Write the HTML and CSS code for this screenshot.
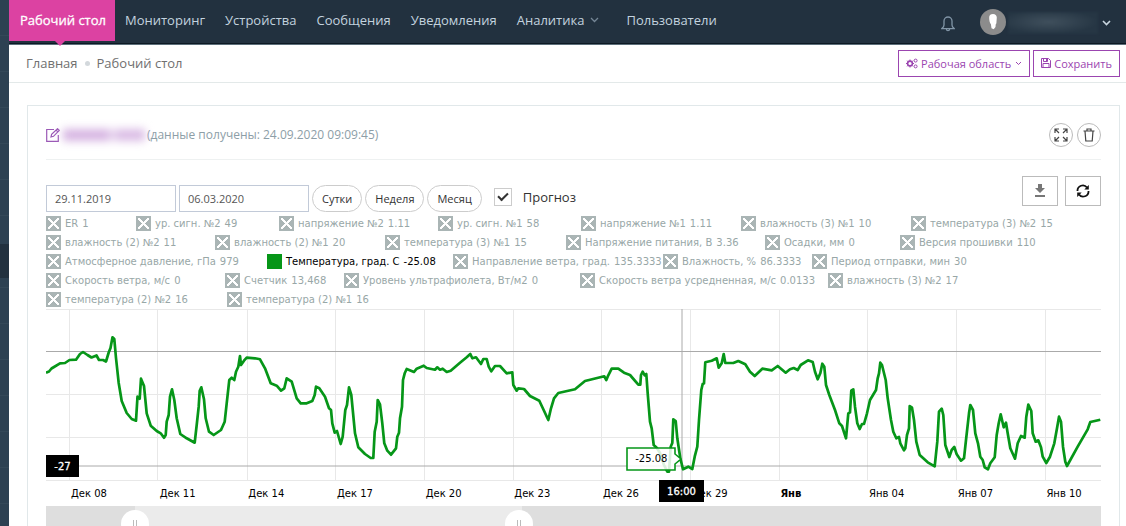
FILE: index.html
```html
<!DOCTYPE html>
<html lang="ru">
<head>
<meta charset="utf-8">
<title>Рабочий стол</title>
<link rel="stylesheet" href="styles.css">
</head>
<body>
<div class="app">
<aside class="rail"><div class="rail-active"></div></aside>
<div class="page">
<header class="topbar">
<nav class="nav">
<a class="nav-link active" href="#">Рабочий стол</a>
<a class="nav-link" href="#">Мониторинг</a>
<a class="nav-link" href="#">Устройства</a>
<a class="nav-link" href="#">Сообщения</a>
<a class="nav-link" href="#">Уведомления</a>
<a class="nav-link has-menu" href="#">Аналитика <svg class="nav-caret" width="9" height="6" viewBox="0 0 9 6"><path d="M1 1l3.5 3.5L8 1"/></svg></a>
<a class="nav-link" href="#">Пользователи</a>
</nav>
<div class="account">
<button class="bare bell" aria-label="Уведомления"><svg width="14" height="17" viewBox="0 0 14 17"><path d="M7 1.2V2M3 7V6a4 4 0 0 1 8 0v4q0 2 2.2 3.6H.8Q3 12 3 10zM5.3 14q.2 1.700 1.700 1.700T8.700 14"/></svg></button>
<button class="bare user" aria-label="Профиль"><svg width="26" height="26" viewBox="0 0 26 26"><circle cx="13" cy="13" r="13" fill="#8c8c8c"/><path d="M9.200 8Q9.500 5 13 5t3.800 3.500l-.3 4q.2 2-.8 3l-.2 2.500-1.800 2.300-2.200-1-.6-4Q9 13 9.200 8z" fill="#fff"/></svg><span class="user-name"></span><svg class="user-caret" width="9" height="7" viewBox="0 0 9 7"><path d="M1 1l3.500 3.500L8 1"/></svg></button>
</div>
</header>
<div class="crumbbar">
<div class="crumbs"><a href="#">Главная</a><span class="dot"></span><span>Рабочий стол</span></div>
<div class="actions">
<button class="outline"><svg class="gears" width="12" height="11" viewBox="0 0 12 11"><circle cx="4" cy="5.500" r="2.400" stroke-width="1.600"/><path d="M4 1.500v1.500M4 8v1.500M0 5.500h1.500M6.500 5.500H8M1.200 2.700l1 1M5.800 7.300l1 1M6.800 2.700l-1 1M2.200 7.300l-1 1"/><circle cx="9.600" cy="2.600" r="1.500"/><circle cx="9.600" cy="8.400" r="1.500"/></svg>Рабочая область<svg class="small-caret" width="7" height="5" viewBox="0 0 7 5"><path d="M1 1l2.500 2.500L6 1"/></svg></button>
<button class="outline"><svg width="10" height="10" viewBox="0 0 10 10"><path d="M.5.5h7l2 2v7h-9zM2.500.5v3h4v-3M2 9.500v-4h6v4M5.500 1v2"/></svg>Сохранить</button>
</div>
</div>
<main class="content">
<section class="card">
<div class="card-head">
<div class="card-title"><svg class="edit" width="14" height="14" viewBox="0 0 14 14"><path d="M8 1.500H.7v11.800h11.600V7M5 9l.6-2.600L11.500.7l1.800 1.700-5.800 5.900zM10 2l1.900 1.900"/></svg><span class="device-name"></span><span>(данные получены: 24.09.2020 09:09:45)</span></div>
<div class="card-tools">
<button class="round" aria-label="Развернуть"><svg width="14" height="14" viewBox="0 0 14 14"><path d="M1 5V1h4M1 1l4 4M9 1h4v4M13 1L9 5M1 9v4h4M1 13l4-4M13 9v4H9M13 13L9 9"/></svg></button>
<button class="round" aria-label="Удалить"><svg width="12" height="14" viewBox="0 0 12 14"><path d="M.5 3h11M4 3V1h4v2M2 3l.8 10h6.400L10 3"/></svg></button>
</div>
</div>
<div class="toolbar">
<input class="date" type="text" value="29.11.2019" aria-label="Дата начала">
<input class="date" type="text" value="06.03.2020" aria-label="Дата окончания">
<button class="pill">Сутки</button>
<button class="pill">Неделя</button>
<button class="pill">Месяц</button>
<label class="forecast"><input type="checkbox" checked>Прогноз</label>
<div class="chart-tools">
<button class="square" aria-label="Скачать"><svg width="12" height="14" viewBox="0 0 12 14"><path d="M4 0h4v4h3L6 9 1 4h3zM1 11h10v2H1z" fill="#777"/></svg></button>
<button class="square" aria-label="Обновить"><svg class="refresh" width="14" height="14" viewBox="0 0 14 14"><path d="M1.500 7A5.300 5.300 0 0 1 11 3.500M12.500 7A5.300 5.300 0 0 1 3 10.500"/><path class="tip" d="M12.800 1v4.500H8.300zM1.200 13V8.500h4.500z"/></svg></button>
</div>
</div>
<div class="legend">
<div class="legend-row row-a"><span class="item">ER <b>1</b></span><span class="item">ур. сигн. №2 <b>49</b></span><span class="item">напряжение №2 <b>1.11</b></span><span class="item">ур. сигн. №1 <b>58</b></span><span class="item">напряжение №1 <b>1.11</b></span><span class="item">влажность (3) №1 <b>10</b></span><span class="item">температура (3) №2 <b>15</b></span></div>
<div class="legend-row row-b"><span class="item">влажность (2) №2 <b>11</b></span><span class="item">влажность (2) №1 <b>20</b></span><span class="item">температура (3) №1 <b>15</b></span><span class="item">Напряжение питания, В <b>3.36</b></span><span class="item">Осадки, мм <b>0</b></span><span class="item">Версия прошивки <b>110</b></span></div>
<div class="legend-row row-c"><span class="item">Атмосферное давление, гПа <b>979</b></span><span class="item on">Температура, град. C <b>-25.08</b></span><span class="item">Направление ветра, град. <b>135.3333</b></span><span class="item">Влажность, % <b>86.3333</b></span><span class="item">Период отправки, мин <b>30</b></span></div>
<div class="legend-row row-d"><span class="item">Скорость ветра, м/с <b>0</b></span><span class="item">Счетчик <b>13,468</b></span><span class="item">Уровень ультрафиолета, Вт/м2 <b>0</b></span><span class="item">Скорость ветра усредненная, м/с <b>0.0133</b></span><span class="item">влажность (3) №2 <b>17</b></span></div>
<div class="legend-row row-e"><span class="item">температура (2) №2 <b>16</b></span><span class="item">температура (2) №1 <b>16</b></span></div>
</div>
<div class="chart">
<svg class="plot" viewBox="46 309 1055 172" preserveAspectRatio="none">
<path class="grid" d="M46 309.500H1101M46 394.500H1101M46 437.500H1101M46 480.500H1101M69.500 309V480M157.500 309V480M247.500 309V480M335.500 309V480M424.500 309V480M513.500 309V480M601.500 309V480M690.500 309V480M779.500 309V480M867.500 309V480M956.500 309V480M1045.500 309V480"/>
<path class="guide" d="M46 351.500H1101M46 466H1101M682 309V480"/>
<polyline class="series" points="46,372.700 49,371.500 51.500,368.500 60,363.300 65,363 69.500,360 76,359.700 80,354 83,352 87.500,355 91.500,357.500 96.500,355.500 99,360 103,360 106,361.500 108.700,352.500 110.500,348 112.500,337.300 114.300,339 116,358 118.700,383 121.700,401 126.700,413 131.700,419 136,420.700 137.500,396.700 139.700,398.700 141,378.700 144,386 146.700,413.300 150.700,425.700 156.700,431 160.700,433.300 164,437.700 165.700,435 166.700,421.700 168.700,415 170,396.700 172,389.300 174.300,400 176.700,418.300 180.300,434 186.700,438.300 194.700,442.700 196.700,425 198.700,406.700 199.700,390.700 201.300,387.300 204,399.300 205.700,418.300 209,431.700 213.700,435 221,430 224.700,421.700 226.700,403.300 229.300,380 231.700,377.700 234.300,380 236,371.700 238.300,366.700 240,356 241,365 244,360.700 246.700,357.700 255,358.300 260,359.300 265,368.300 270.700,383.300 276.700,385.700 281,390.700 284.300,388.300 286.700,378.300 291.700,381.700 296.700,398.300 300.700,403.300 306.700,403.300 312.300,401 314.700,395 316,386.700 319.300,388.300 325,396.700 329,408.300 331,410 332.300,423.300 334.700,432.700 337,431 340.700,444 342.700,436.700 345.300,410 347,405 349,387.300 351.300,395 355,433.300 358.300,447.300 365,454 370.700,458 373.300,458 374.700,431.700 376.700,421.700 377.700,400 380,404.300 382.300,423.300 384.300,443.300 387.300,450.700 391,454.700 396,448.300 397.300,436.700 399,432.700 400,418.300 402,406.700 403,380 404.700,373.300 406.700,369 414,372 416.700,368.700 423.700,365.700 426.700,368 435,369.700 437.300,367.300 440,369.700 442.700,368.700 446.700,372 450.700,370.700 460,362.700 466.700,357.300 470.300,354 472.300,358.300 476,357.300 481,364 483.300,359 486.700,359 488.700,366.700 491.300,371.300 495,366 500,366 506.700,373.300 512.300,372.300 513.300,385 516.700,390.700 518.300,388.300 524,389 530,396 539.300,400.700 543.300,409.300 548.300,420 551,408.300 554,398.300 558.300,393 575,389.300 585,381 604.300,376.300 606.300,380 608.300,375.300 611.700,368.700 618.300,368.700 624,372.700 630,375 638.300,384.700 640.300,384.700 641,375 642.700,371.700 644.700,375.300 646.300,374 647.700,393.300 650,421.700 651.700,428.300 653.700,445 656.700,447.700 660,453 664,465 667.300,471.700 669,471.700 670.700,446.700 672.300,443 673.300,419.300 675.700,421 677.300,438.300 680.300,458.300 683,469.300 688.300,466.700 692.300,469 694.700,456.700 697.300,446.700 699,420 701.300,390 702.700,384 704,383.300 705.300,362.300 711.700,360.700 716.700,358.300 718.700,367.700 721.700,363.300 723.700,354 725.300,363 733.300,363 738.300,361 745.300,364.300 750,371.700 754.700,376 762.300,368.700 771.700,370.300 777.700,366 785.700,372.700 790,369.300 793.700,368 797.700,370 800.700,365 808,360.300 812.700,362 815,371.700 817.700,379.300 820.300,373.300 822.300,363.700 824.300,366.700 826,385 829.300,395 835,410 839.300,423.300 842,426 846,438.300 848.300,413.300 850,412.300 851.300,390.700 853.300,389.300 855,406.700 857.300,423.300 859.700,429 862,424 864,424 867,413.300 870,400 876,390 877.700,378.300 879,373.300 880.300,362.700 882,365 885.700,380 887.700,398.300 891,420 893.300,431.700 896.300,438.300 899,437 900.300,443.300 904,450.300 905.300,448.300 907,435 909,428.300 909.700,406 912,407.700 914,420 916.300,441.700 919.700,455 927.700,462.300 934.700,466.300 937.300,441.700 939,411.700 941.700,408.700 943.300,415 945.300,445 949.300,457 951.700,450 954.300,447 956.700,454.300 961,460.700 964,458.300 966,440 969,413.300 970.300,405 973,410 975.300,433.300 978,443.300 980.300,456.700 982.700,460 984.700,467.300 988,469.300 990.300,463.300 994.700,457.300 996.700,435 998.700,423.300 1000.700,414.300 1003.700,427.300 1006,422.700 1007.700,433.300 1010.300,448.300 1015,458.700 1017.700,443.300 1021,436 1024.700,437.700 1026.300,416.700 1028.300,404.700 1031.300,411 1032.700,433.300 1035.700,441.700 1038.300,440.300 1041,447.300 1042.700,456.700 1046.300,463 1050,456.700 1054.300,443.300 1057,428.300 1059,416.700 1061,421.700 1063,446.700 1065.300,461.700 1067,466 1077.700,446.700 1087.700,429.300 1090.300,422 1100.300,419.700"/>
</svg>
<div class="axis"><span>Дек 08</span><span>Дек 11</span><span>Дек 14</span><span>Дек 17</span><span>Дек 20</span><span>Дек 23</span><span>Дек 26</span><span>Дек 29</span><span class="month">Янв</span><span>Янв 04</span><span>Янв 07</span><span>Янв 10</span></div>
<div class="tag tag-value">-27</div>
<div class="tag tag-time">16:00</div>
<div class="balloon"><svg width="56" height="24" viewBox="0 0 56 24"><path d="M1 1H49V7L55 12L49 17V23H1z"/></svg><span>-25.08</span></div>
<div class="scroll"><div class="range"></div><button class="grip grip-start" aria-label="Начало периода"></button><button class="grip grip-end" aria-label="Конец периода"></button></div>
</div>
</section>
</main>
</div>
</div>
</body>
</html>
```
FILE: styles.css
```css
*, *::before, *::after { box-sizing: border-box; }
body { margin: 0; font-family: "Open Sans", "Noto Sans", sans-serif; font-size: 12px; color: #333; background: #fff; }
button, input { font-family: inherit; font-size: 11px; margin: 0; }
button { cursor: pointer; padding: 0; }
svg { display: block; fill: none; flex: none; }
a { color: inherit; text-decoration: none; }

.app { display: grid; grid-template-columns: 9px minmax(0, 1fr); height: 100vh; overflow: hidden; }
.rail { background: repeating-linear-gradient(#2d4152 0 35px, #344858 35px 36px); padding-top: 244px; }
.rail-active { height: 34px; background: #22313f; }
.page { min-width: 0; }

.topbar { display: flex; justify-content: space-between; height: 45px; background: #22313f; border-bottom: 1px solid #5c6e7a; box-shadow: inset 0 -1px #0d1923; }
.nav { display: flex; align-items: flex-start; }
.nav-link { display: flex; align-items: center; gap: 6px; height: 41px; padding: 0 10px 1px; font-size: 13px; color: #c3d3df; }
.has-menu { padding-right: 17px; }
.active { position: relative; padding: 0 9px 1px 11px; background: #dc42a2; color: #fff; -webkit-text-stroke: 0.3px #fff; }
.active::after { content: ""; position: absolute; left: 46px; top: 41px; border: 5px solid transparent; border-top-color: #dc42a2; border-bottom: 0; }
.nav-caret { stroke: #758696; stroke-width: 1.3; }
.account { display: flex; align-items: center; gap: 25px; padding: 0 15px 0 0; }
.bare { border: 0; background: none; }
.bell { stroke: #8195a6; stroke-width: 1.3; padding-top: 2px; }
.user { display: flex; align-items: center; }
.user-name { width: 90px; height: 22px; margin: 2px 4px 0 2px; background: radial-gradient(ellipse at 45% 45%, #40505d, #263644 70%); filter: blur(1px); }
.user-caret { stroke: #c9d6df; stroke-width: 1.6; margin-top: 2px; }

.crumbbar { display: flex; justify-content: space-between; align-items: center; height: 38px; padding: 0 6px 1px 17px; border-bottom: 1px solid #e3e9e9; }
.crumbs { display: flex; align-items: center; gap: 7px; font-size: 13px; color: #707070; }
.dot { width: 5px; height: 5px; border-radius: 50%; background: #d3d8dc; }
.actions { display: flex; gap: 3px; }
.outline { display: flex; align-items: center; justify-content: center; gap: 3px; height: 27px; padding: 0 7px; border: 1px solid #9b45b0; background: #fff; color: #9b45b0; }
.outline svg { stroke: #9b45b0; }
.small-caret { margin-left: 1px; }

.content { padding: 22px 6px 0 18px; }
.card { border: 1px solid #e1e8ea; padding: 0 18px; height: 440px; }
.card-head { display: flex; justify-content: space-between; align-items: center; height: 54px; padding-top: 4px; border-bottom: 1px solid #eef1f1; }
.card-title { display: flex; align-items: center; color: #8d9ea7; }
.edit { stroke: #9b59b6; stroke-width: 1.2; }
.device-name { width: 82px; height: 12px; margin: 0 2px 0 3px; background: linear-gradient(90deg, #d6b4e2 0 54%, #eee2f3 60%, #dabce5 67%); filter: blur(4px); }
.card-tools { display: flex; gap: 4px; }
.round { display: grid; place-items: center; width: 24px; height: 24px; border: 1px solid #bbb; border-radius: 50%; background: #fff; }
.round svg { stroke: #444; stroke-width: 1.2; }

.toolbar { display: flex; gap: 3px; height: 52px; padding-top: 16px; align-items: flex-end; }
.date { width: 130px; height: 27px; padding: 0 8px; border: 1px solid #c2cad8; color: #555; background: #fff; }
.pill { height: 27px; padding: 0 9px; border: 1px solid #ccc; border-radius: 14px; background: #fff; color: #333; }
.forecast { display: flex; align-items: center; gap: 11px; height: 31px; margin-left: 9px; font-size: 13px; }
.forecast input { appearance: none; width: 18px; height: 18px; border: 1px solid #ccc; display: grid; place-items: center; }
.forecast input::before { content: ""; width: 10px; height: 6px; border: solid #333; border-width: 0 0 2px 2px; transform: rotate(-45deg) translate(1px, -1px); }
.chart-tools { display: flex; gap: 7px; margin-left: auto; align-self: flex-start; }
.square { display: grid; place-items: center; width: 36px; height: 30px; border: 1px solid #bbb; background: #fff; }
.refresh { stroke: #111; stroke-width: 1.8; }
.tip { fill: #111; stroke: none; }

.legend { font-family: "DejaVu Sans", sans-serif; font-size: 10px; padding-top: 2px; color: #98a7a7; white-space: nowrap; }
.legend-row { display: grid; height: 19px; align-items: center; }
.row-a { grid-template-columns: 90fr 143fr 159fr 143fr 160fr 170fr 190fr; }
.row-b { grid-template-columns: 169fr 170fr 181fr 199fr 135fr 201fr; }
.row-c { grid-template-columns: 221fr 186fr 210fr 149fr 289fr; }
.row-d { grid-template-columns: 179fr 119fr 236fr 248fr 273fr; }
.row-e { grid-template-columns: 181fr 874fr; }
.item { display: flex; align-items: center; gap: 4px; min-width: 0; }
.item b { font-weight: 400; }
.item::before { content: ""; width: 15px; height: 15px; flex: none; background: linear-gradient(45deg, transparent 42%, #fff 42% 58%, transparent 58%), linear-gradient(-45deg, transparent 42%, #fff 42% 58%, transparent 58%), #aab5b5; border: 2px solid #aab5b5; }
.item.on { color: #000; }
.item.on::before { background: #069618; border-color: #069618; }

.chart { position: relative; font-family: "DejaVu Sans", sans-serif; font-size: 10px; color: #000; }
.plot { width: 100%; height: 172px; }
.plot path, .plot polyline { vector-effect: non-scaling-stroke; }
.grid { stroke: #e8e8e8; }
.guide { stroke: #aaa; }
.series { stroke: #069618; stroke-width: 2.7; stroke-linejoin: round; }
.axis { display: grid; grid-template-columns: repeat(11, 887fr) 546fr; height: 25px; padding-left: 25px; align-items: center; white-space: nowrap; }
.month { font-weight: 700; }
.tag { position: absolute; display: grid; place-items: center; height: 22px; background: #000; color: #fff; -webkit-text-stroke: 0.3px #fff; }
.tag-value { left: 0; top: 146px; width: 33px; }
.tag-time { left: 58.1%; top: 171px; width: 45px; }
.balloon { position: absolute; left: 55%; top: 138px; width: 56px; height: 24px; }
.balloon path { fill: #fff; fill-opacity: 0.85; stroke: #069618; stroke-width: 1.6; }
.balloon span { position: absolute; left: 9px; top: 6px; }
.scroll { position: relative; height: 40px; background: #dedede; }
.range { height: 40px; margin: 0 54.9% 0 8.4%; background: #ebebeb; }
.grip { position: absolute; top: 4px; width: 28px; height: 28px; border: 0; border-radius: 50%; background: #fff; }
.grip::after { content: ""; display: block; width: 4px; height: 9px; margin: 0 auto; border: solid #bbb; border-width: 0 1px; }
.grip-start { left: 7.1%; }
.grip-end { left: 43.5%; }
```
